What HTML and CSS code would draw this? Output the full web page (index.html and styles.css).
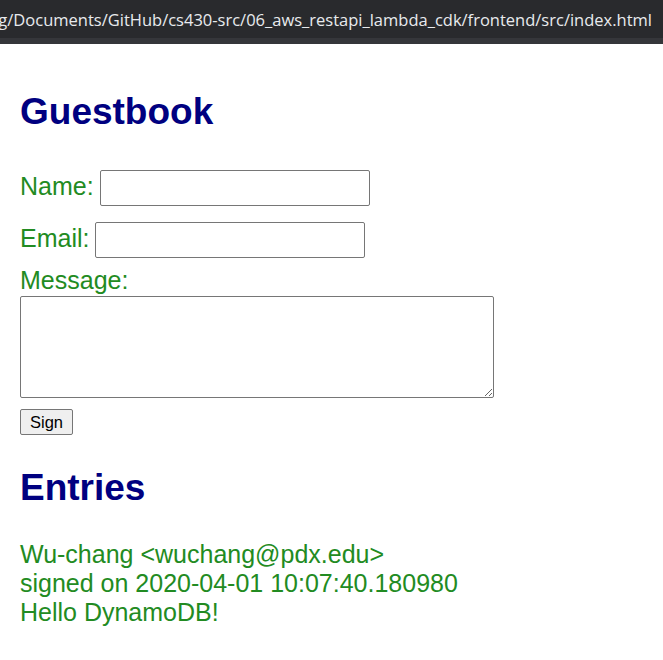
FILE: index.html
```html
<!DOCTYPE html>
<html>
<head>
<meta charset="utf-8">
<title>Guestbook</title>
<link rel="stylesheet" href="styles.css">
</head>
<body>
<div class="chrome">
  <div class="url">g/Documents/GitHub/cs430-src/06_aws_restapi_lambda_cdk/frontend/src/index.html</div>
</div>
<div class="strip"></div>
<main class="page">
  <h1 class="title">Guestbook</h1>
  <form class="form">
    <div class="row row-name">
      <label class="lbl">Name:</label>
      <input class="field" type="text">
    </div>
    <div class="row row-email">
      <label class="lbl">Email:</label>
      <input class="field" type="text">
    </div>
    <label class="lbl msg-lbl">Message:</label>
    <textarea class="msg"></textarea>
    <button class="sign" type="button">Sign</button>
  </form>
  <h1 class="title entries-title">Entries</h1>
  <div class="entry">
    <div class="line">Wu-chang &lt;wuchang@pdx.edu&gt;</div>
    <div class="line">signed on 2020-04-01 10:07:40.180980</div>
    <div class="line">Hello DynamoDB!</div>
  </div>
</main>
</body>
</html>
```

FILE: styles.css
```css
html, body {
  margin: 0;
  padding: 0;
  background: #ffffff;
}

.chrome {
  height: 38px;
  background: #292a2d;
  display: flex;
  justify-content: flex-end;
  align-items: center;
  overflow: hidden;
  padding-right: 11px;
}

.url {
  white-space: nowrap;
  color: #e8eaed;
  font-family: "Open Sans", "Noto Sans", sans-serif;
  font-size: 16.5px;
  letter-spacing: 0;
  flex: none;
}

.strip {
  height: 6px;
  background: #35363a;
}

.page {
  padding: 0 20px;
  font-family: "Liberation Sans", Arial, sans-serif;
  font-size: 25px;
  line-height: 29px;
  color: #228b22;
}

.title {
  margin: 46px 0 0 0;
  font-size: 37px;
  line-height: 43px;
  font-weight: bold;
  color: #000080;
}

.form {
  margin: 37px 0 0 0;
  display: flex;
  flex-direction: column;
  align-items: flex-start;
}

.row {
  display: flex;
  align-items: flex-start;
  gap: 6px;
}

.row-email {
  margin-top: 16px;
}

.lbl {
  display: block;
  padding-top: 2px;
}

.field {
  box-sizing: border-box;
  width: 270px;
  height: 36px;
  margin: 0;
  border: 1px solid #767676;
  border-radius: 2px;
  background: #fff;
  padding: 2px 3px;
  font-size: 16px;
}

.msg-lbl {
  margin-top: 8px;
  padding-top: 0;
  line-height: 29px;
}

.msg {
  box-sizing: border-box;
  width: 474px;
  height: 102px;
  margin: 1px 0 0 0;
  border: 1px solid #767676;
  border-radius: 2px;
  padding: 2px;
  resize: both;
}

.sign {
  box-sizing: border-box;
  margin-top: 11px;
  width: 53px;
  height: 26px;
  padding: 0;
  border: 1px solid #767676;
  border-radius: 2px;
  background: #efefef;
  color: #000;
  font-family: "Liberation Sans", Arial, sans-serif;
  font-size: 16.5px;
  line-height: 20px;
}

.entries-title {
  margin-top: 31px;
}

.entry {
  margin-top: 31px;
}

.line {
  white-space: nowrap;
}
```
